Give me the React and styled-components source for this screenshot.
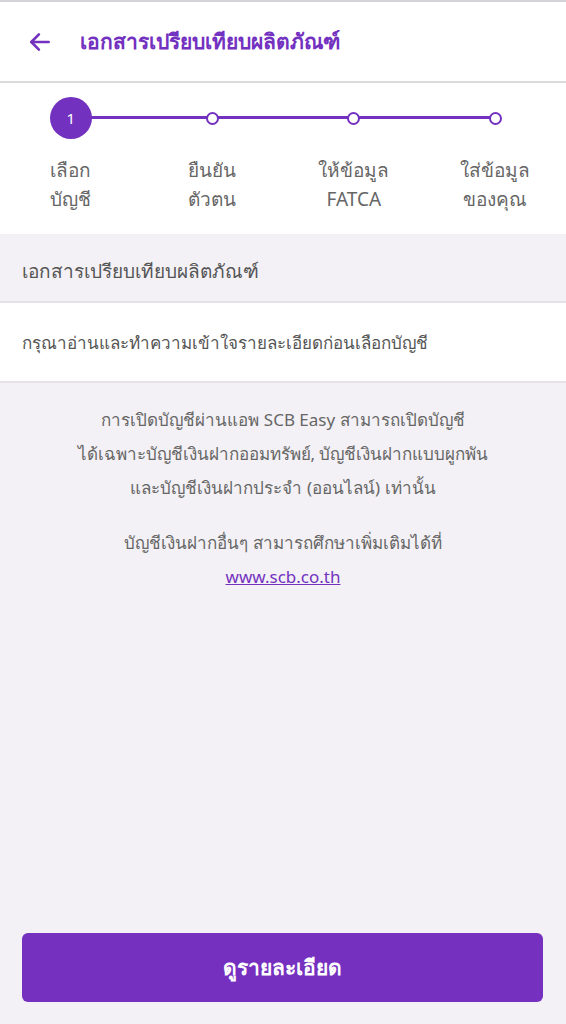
import styled, { createGlobalStyle } from "styled-components";

const GlobalStyle = createGlobalStyle`
  html, body {
    margin: 0;
    padding: 0;
    background: #f3f1f5;
  }
  body {
    font-family: "Noto Sans", "Liberation Sans", sans-serif;
  }
`;

const steps = [
  ["เลือก", "บัญชี"],
  ["ยืนยัน", "ตัวตน"],
  ["ให้ข้อมูล", "FATCA"],
  ["ใส่ข้อมูล", "ของคุณ"],
];

const App = () => {
  return (
    <Screen>
      <GlobalStyle />
      <Header>
        <BackButton>
          <svg width="26" height="26" viewBox="0 0 24 24" fill="none" stroke="#7331bf" strokeWidth="2.4" strokeLinecap="round" strokeLinejoin="round">
            <path d="M20 12H4" />
            <path d="M11 5l-7 7 7 7" />
          </svg>
        </BackButton>
        <Title>เอกสารเปรียบเทียบผลิตภัณฑ์</Title>
      </Header>

      <Stepper>
        <Line />
        {steps.map((step, index) => (
          <Step key={index}>
            <Marker>
              {index === 0 ? <ActiveDot>1</ActiveDot> : <Dot />}
            </Marker>
            <Label>
              <span>{step[0]}</span>
              <span>{step[1]}</span>
            </Label>
          </Step>
        ))}
      </Stepper>

      <SectionTitle>เอกสารเปรียบเทียบผลิตภัณฑ์</SectionTitle>
      <InfoRow>กรุณาอ่านและทำความเข้าใจรายละเอียดก่อนเลือกบัญชี</InfoRow>

      <Notice>
        <p>
          การเปิดบัญชีผ่านแอพ SCB Easy สามารถเปิดบัญชี
          <br />
          ได้เฉพาะบัญชีเงินฝากออมทรัพย์, บัญชีเงินฝากแบบผูกพัน
          <br />
          และบัญชีเงินฝากประจำ (ออนไลน์) เท่านั้น
        </p>
        <p>
          บัญชีเงินฝากอื่นๆ สามารถศึกษาเพิ่มเติมได้ที่
          <br />
          <a href="#">www.scb.co.th</a>
        </p>
      </Notice>

      <Footer>
        <PrimaryButton>ดูรายละเอียด</PrimaryButton>
      </Footer>
    </Screen>
  );
};

const Screen = styled.div`
  width: 566px;
  height: 1024px;
  display: flex;
  flex-direction: column;
  background: #f3f1f5;
  border-top: 2px solid #d6d4d8;
  box-sizing: border-box;
  overflow: hidden;
`;

const Header = styled.div`
  height: 79px;
  background: #fff;
  display: flex;
  align-items: center;
  padding-left: 26px;
  border-bottom: 2px solid #dcdadd;
  box-shadow: 0 1px 2px rgba(0, 0, 0, 0.06);
`;

const BackButton = styled.div`
  width: 28px;
  height: 28px;
  display: flex;
  align-items: center;
  justify-content: center;
  margin-right: 26px;
`;

const Title = styled.div`
  color: #7331bf;
  font-size: 21px;
  font-weight: 700;
`;

const Stepper = styled.div`
  position: relative;
  background: #fff;
  height: 151px;
  padding-top: 14px;
  box-sizing: border-box;
  display: grid;
  grid-template-columns: repeat(4, 141.5px);
  align-content: start;
`;

const Line = styled.div`
  position: absolute;
  left: 71px;
  width: 424px;
  top: 33px;
  height: 3px;
  background: #7331bf;
`;

const Step = styled.div`
  position: relative;
  display: flex;
  flex-direction: column;
  align-items: center;
`;

const Marker = styled.div`
  height: 42px;
  display: flex;
  align-items: center;
  justify-content: center;
`;

const ActiveDot = styled.div`
  width: 42px;
  height: 42px;
  border-radius: 50%;
  background: #7331bf;
  color: #fff;
  font-size: 15px;
  display: flex;
  align-items: center;
  justify-content: center;
`;

const Dot = styled.div`
  width: 9px;
  height: 9px;
  border-radius: 50%;
  background: #fff;
  border: 2px solid #7331bf;
`;

const Label = styled.div`
  display: flex;
  flex-direction: column;
  align-items: center;
  margin-top: 17px;
  color: #666;
  font-size: 19px;
  line-height: 29px;
`;

const SectionTitle = styled.div`
  height: 61px;
  display: flex;
  align-items: center;
  padding: 6px 0 0 22px;
  color: #555;
  font-size: 19px;
  border-bottom: 2px solid #e4e2e6;
`;

const InfoRow = styled.div`
  height: 78px;
  display: flex;
  align-items: center;
  padding-left: 22px;
  background: #fff;
  color: #555;
  font-size: 17px;
  border-bottom: 2px solid #e4e2e6;
`;

const Notice = styled.div`
  flex: 1;
  text-align: center;
  color: #666;
  font-size: 17px;
  line-height: 34px;
  padding-top: 20px;

  p {
    margin: 0 0 21px;
  }

  a {
    color: #7331bf;
    text-decoration: underline;
  }
`;

const Footer = styled.div`
  padding: 0 23px 22px 22px;
`;

const PrimaryButton = styled.button`
  width: 100%;
  height: 69px;
  border: none;
  border-radius: 6px;
  background: #7530c0;
  color: #fff;
  font-family: inherit;
  font-size: 21px;
  font-weight: 700;
`;

export default App;
